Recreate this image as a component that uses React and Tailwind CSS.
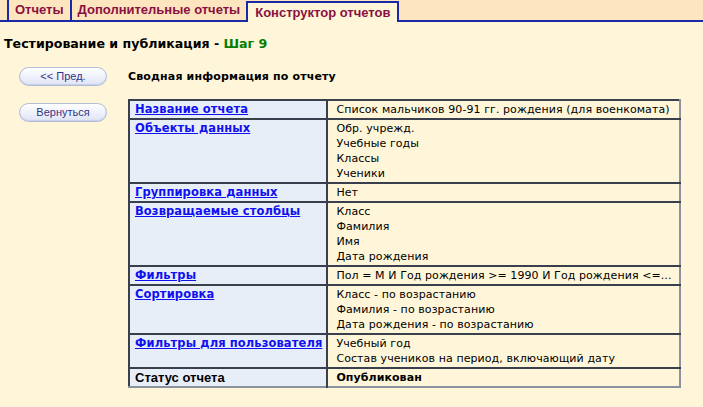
import React from 'react';

const rows = [
  { label: 'Название отчета', values: ['Список мальчиков 90-91 гг. рождения (для военкомата)'] },
  { label: 'Объекты данных', values: ['Обр. учрежд.', 'Учебные годы', 'Классы', 'Ученики'] },
  { label: 'Группировка данных', values: ['Нет'] },
  { label: 'Возвращаемые столбцы', values: ['Класс', 'Фамилия', 'Имя', 'Дата рождения'] },
  { label: 'Фильтры', values: ['Пол = М И Год рождения >= 1990 И Год рождения <=...'] },
  { label: 'Сортировка', values: ['Класс - по возрастанию', 'Фамилия - по возрастанию', 'Дата рождения - по возрастанию'] },
  { label: 'Фильтры для пользователя', values: ['Учебный год', 'Состав учеников на период, включающий дату'] },
];

const tabs = [
  { title: 'Отчеты', active: false },
  { title: 'Дополнительные отчеты', active: false },
  { title: 'Конструктор отчетов', active: true },
];

const PillButton = ({ children }) => (
  <button className="w-[88px] h-[19px] rounded-full border border-[#b3bbd9] bg-gradient-to-b from-white to-[#dfe4f6] text-[11px] leading-none text-[#30348a] font-['Liberation_Sans',sans-serif] shadow-[inset_0_-1px_1px_#c8cfea]">
    {children}
  </button>
);

const App = () => {
  return (
    <div className="w-[703px] h-[407px] bg-[#fff6d9] overflow-hidden font-['DejaVu_Sans',sans-serif]">
      {/* tabs */}
      <div className="flex items-end h-[22px] bg-[#fde5bf] pl-[7px] border-b-2 border-[#1a2aa6]">
        {tabs.map((t) =>
          t.active ? (
            <div
              key={t.title}
              className="-mb-[2px] h-[21px] px-[7px] flex items-center bg-[#fff6d9] border-2 border-b-0 border-[#1a2aa6] text-[13px] font-bold text-[#8a1040] font-['Liberation_Sans',sans-serif]"
            >
              {t.title}
            </div>
          ) : (
            <div
              key={t.title}
              className="h-[20px] px-[6px] flex items-center border-l-2 border-[#1a2aa6] text-[13px] font-bold text-[#8a1040] font-['Liberation_Sans',sans-serif]"
            >
              {t.title}
            </div>
          )
        )}
      </div>

      <div className="pl-[4px] pt-[14px] h-[30px] text-[12.6px] leading-[16px] font-bold text-black">
        Тестирование и публикация - <span className="text-[#008000]">Шаг 9</span>
      </div>

      <div className="flex mt-[15px]">
        <div className="w-[128px] pl-[19px] flex flex-col gap-[17px]">
          <PillButton>&lt;&lt; Пред.</PillButton>
          <PillButton>Вернуться</PillButton>
        </div>

        <div>
          <div className="h-[19px] flex items-center text-[11px] font-bold text-black pt-[1px] tracking-[0.15px]">
            Сводная информация по отчету
          </div>
          <table className="mt-[13px] w-[553px] border-collapse border-2 border-t-[#3a3f4e] border-l-[#3a3f4e] border-r-[#8c91a0] border-b-[#8c91a0] text-[11px] leading-[15px] tracking-[0.08px]">
            <tbody>
              {rows.map((r) => (
                <tr key={r.label}>
                  <td className="w-[198px] align-top bg-[#e8eef8] border-b-2 border-r-2 border-[#3a3f4e] pl-[5px] pr-[4px] pt-[1px] pb-[1px]">
                    <a href="#" className="font-bold text-[11.5px] tracking-[0.1px] text-[#1010f0] underline whitespace-nowrap">
                      {r.label}
                    </a>
                  </td>
                  <td className="align-top border-b-2 border-[#3a3f4e] pl-[8px] pr-[4px] pt-[1px] pb-[1px] text-black">
                    {r.values.map((v) => (
                      <div key={v} className="whitespace-nowrap">{v}</div>
                    ))}
                  </td>
                </tr>
              ))}
              <tr>
                <td className="align-top bg-[#e8eef8] border-r-2 border-[#3a3f4e] pl-[5px] pt-[1px] pb-[1px] font-bold text-black font-['Liberation_Sans',sans-serif] text-[13px] leading-[15px] tracking-normal">
                  Статус отчета
                </td>
                <td className="align-top pl-[8px] pt-[1px] pb-[1px] font-bold text-black">
                  Опубликован
                </td>
              </tr>
            </tbody>
          </table>
        </div>
      </div>
    </div>
  );
};

export default App;
